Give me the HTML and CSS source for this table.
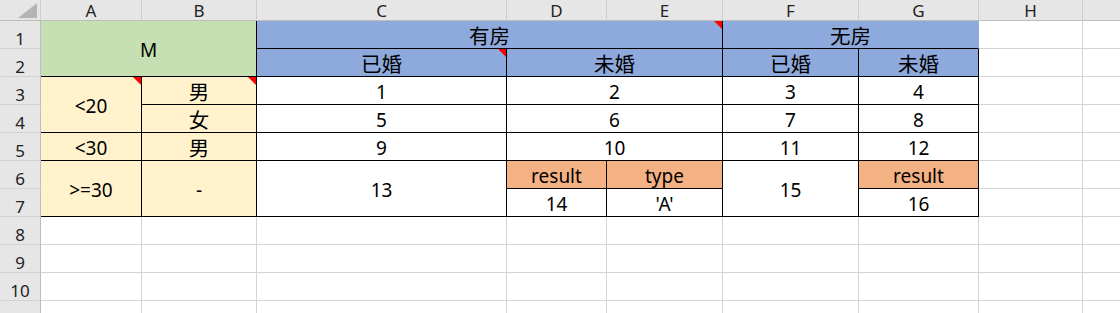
FILE: index.html
```html
<!DOCTYPE html>
<html lang="zh-CN">
<head>
<meta charset="utf-8">
<title>Sheet1</title>
<link rel="stylesheet" href="styles.css">
</head>
<body>
<div class="sheet">
  <!-- column headers -->
  <div class="corner"><svg class="select-all" width="19" height="15" viewBox="0 0 19 15"><polygon points="19,0 19,15 0,15" fill="#b4b4b4"/></svg></div>
  <div class="col-head">A</div>
  <div class="col-head">B</div>
  <div class="col-head">C</div>
  <div class="col-head">D</div>
  <div class="col-head">E</div>
  <div class="col-head">F</div>
  <div class="col-head">G</div>
  <div class="col-head">H</div>
  <div class="col-head"></div>

  <!-- row 1 -->
  <div class="row-head">1</div>
  <div class="c b green w2 h2">M</div>
  <div class="c b blue w3 note zh">有房</div>
  <div class="c b blue w2 open-right zh">无房</div>
  <div class="c"></div>
  <div class="c"></div>

  <!-- row 2 -->
  <div class="row-head">2</div>
  <div class="c b blue note zh">已婚</div>
  <div class="c b blue w2 zh">未婚</div>
  <div class="c b blue zh">已婚</div>
  <div class="c b blue zh">未婚</div>
  <div class="c"></div>
  <div class="c"></div>

  <!-- row 3 -->
  <div class="row-head">3</div>
  <div class="c b yellow h2 note">&lt;20</div>
  <div class="c b yellow note zh">男</div>
  <div class="c b">1</div>
  <div class="c b w2">2</div>
  <div class="c b">3</div>
  <div class="c b">4</div>
  <div class="c"></div>
  <div class="c"></div>

  <!-- row 4 -->
  <div class="row-head">4</div>
  <div class="c b yellow zh">女</div>
  <div class="c b">5</div>
  <div class="c b w2">6</div>
  <div class="c b">7</div>
  <div class="c b">8</div>
  <div class="c"></div>
  <div class="c"></div>

  <!-- row 5 -->
  <div class="row-head">5</div>
  <div class="c b yellow">&lt;30</div>
  <div class="c b yellow zh">男</div>
  <div class="c b">9</div>
  <div class="c b w2">10</div>
  <div class="c b">11</div>
  <div class="c b">12</div>
  <div class="c"></div>
  <div class="c"></div>

  <!-- rows 6-7 -->
  <div class="row-head">6</div>
  <div class="c b yellow h2">&gt;=30</div>
  <div class="c b yellow h2">-</div>
  <div class="c b h2">13</div>
  <div class="c b orange">result</div>
  <div class="c b orange">type</div>
  <div class="c b h2">15</div>
  <div class="c b orange">result</div>
  <div class="c"></div>
  <div class="c"></div>

  <div class="row-head">7</div>
  <div class="c b">14</div>
  <div class="c b">'A'</div>
  <div class="c b">16</div>
  <div class="c"></div>
  <div class="c"></div>

  <!-- empty rows -->
  <div class="row-head">8</div>
  <div class="c"></div><div class="c"></div><div class="c"></div><div class="c"></div><div class="c"></div><div class="c"></div><div class="c"></div><div class="c"></div><div class="c"></div>
  <div class="row-head">9</div>
  <div class="c"></div><div class="c"></div><div class="c"></div><div class="c"></div><div class="c"></div><div class="c"></div><div class="c"></div><div class="c"></div><div class="c"></div>
  <div class="row-head">10</div>
  <div class="c"></div><div class="c"></div><div class="c"></div><div class="c"></div><div class="c"></div><div class="c"></div><div class="c"></div><div class="c"></div><div class="c"></div>
  <div class="row-head">11</div>
  <div class="c"></div><div class="c"></div><div class="c"></div><div class="c"></div><div class="c"></div><div class="c"></div><div class="c"></div><div class="c"></div><div class="c"></div>
</div>
</body>
</html>
```

FILE: styles.css
```css
html, body {
  margin: 0;
  padding: 0;
  background: #fff;
  overflow: hidden;
}

.sheet {
  display: grid;
  grid-template-columns: 41px 101px 115px 250px 100px 116px 136px 120px 104px 104px;
  grid-template-rows: 21px repeat(11, 28px);
  width: max-content;
  font-family: "Noto Sans", "Noto Sans CJK SC", sans-serif;
  color: #000;
}

.sheet > div {
  box-sizing: border-box;
  min-width: 0;
}

/* headers */
.corner,
.col-head,
.row-head {
  background: #e6e6e6;
  color: #222;
  font-size: 17px;
  line-height: 1;
  display: flex;
  justify-content: center;
  align-items: center;
}

.corner {
  justify-content: flex-end;
  align-items: flex-end;
  padding: 0 3px 2px 0;
  border-right: 1px solid #cdcdcd;
  border-bottom: 1px solid #bdbdbd;
}

.select-all {
  display: block;
}

.col-head {
  border-right: 1px solid #cdcdcd;
  border-bottom: 1px solid #bdbdbd;
  padding-top: 1px;
}

.row-head {
  border-right: 1px solid #bdbdbd;
  border-bottom: 1px solid #d2d2d2;
  padding-top: 7px;
}

/* cells */
.c {
  position: relative;
  border-right: 1px solid #d4d4d4;
  border-bottom: 1px solid #d4d4d4;
  display: flex;
  justify-content: center;
  align-items: center;
  padding-top: 4px;
  font-size: 19px;
  line-height: 1;
  white-space: nowrap;
}

.c.zh {
  font-size: 20.5px;
}

.c.b {
  border-right-color: #000;
  border-bottom-color: #000;
}

.c.open-right {
  border-right-color: transparent;
}

.w2 { grid-column: span 2; }
.w3 { grid-column: span 3; }
.h2 { grid-row: span 2; }

.green  { background: #c6e0b4; }
.blue   { background: #8ea9db; }
.yellow { background: #fff2cc; }
.orange { background: #f4b183; }

/* comment indicator */
.note::after {
  content: "";
  position: absolute;
  top: 0;
  right: 0;
  width: 8px;
  height: 8px;
  background: #ff0000;
  clip-path: polygon(0 0, 100% 0, 100% 100%);
}
```
